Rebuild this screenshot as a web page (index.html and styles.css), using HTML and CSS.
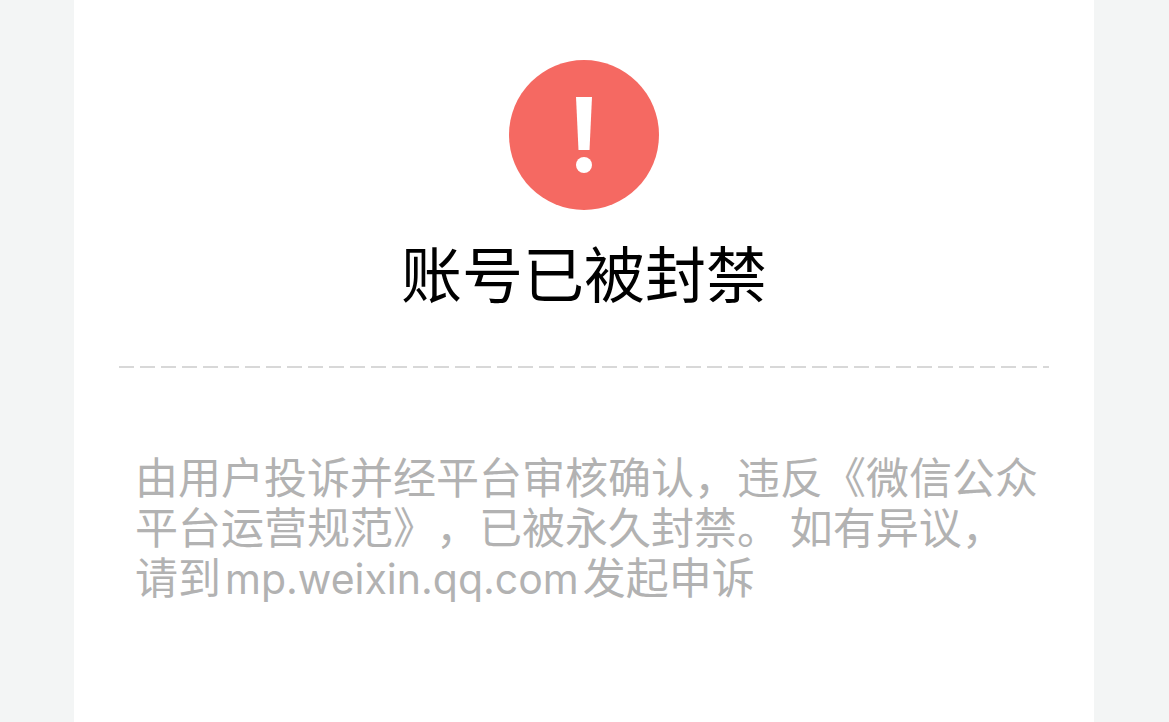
FILE: index.html
```html
<!DOCTYPE html>
<html lang="zh-CN">
<head>
  <meta charset="UTF-8">
  <meta name="viewport" content="width=device-width, initial-scale=1.0">
  <title>账号已被封禁</title>
  <link rel="stylesheet" href="styles.css">
</head>
<body>
  <main class="card">
    <svg class="icon" viewBox="0 0 150 150" aria-hidden="true">
      <circle cx="75" cy="75" r="75" fill="#f56962"/>
      <path d="M67 37h16l-2.500 53h-11z" fill="#fff"/>
      <circle cx="75" cy="105" r="8" fill="#fff"/>
    </svg>
    <h1 class="title">账号已被封禁</h1>
    <div class="divider"></div>
    <p class="message">由用户投诉并经平台审核确认，违反《微信公众平台运营规范》，已被永久封禁。 如有异议，请到<span class="site">mp.weixin.qq.com</span>发起申诉</p>
  </main>
</body>
</html>
```
FILE: styles.css
```css
* { box-sizing: border-box; }
body {
  margin: 0;
  padding: 0 75px 0 74px;
  background: #f3f5f5;
  font-family: "Noto Sans CJK SC", sans-serif;
}
.card {
  min-height: 100vh;
  padding: 60px 45px;
  background: #fff;
}
.icon {
  display: block;
  width: 150px;
  height: 150px;
  margin: 0 auto;
}
.title {
  margin: 18px 0 0;
  color: #000;
  font-size: 61px;
  font-weight: 400;
  line-height: 88px;
  text-align: center;
}
.divider {
  height: 2px;
  margin-top: 50px;
  background: repeating-linear-gradient(to right, #d8d8d8 0 15px, transparent 15px 21px);
}
.message {
  margin: 82px 0 0;
  padding: 0 10px 0 16px;
  color: #b2b2b2;
  font-size: 43px;
  line-height: 50px;
  text-spacing-trim: space-all;
}
.site {
  margin: 0 4px;
  font-family: Inter, "Noto Sans CJK SC", sans-serif;
  font-size: 41px;
}
```
